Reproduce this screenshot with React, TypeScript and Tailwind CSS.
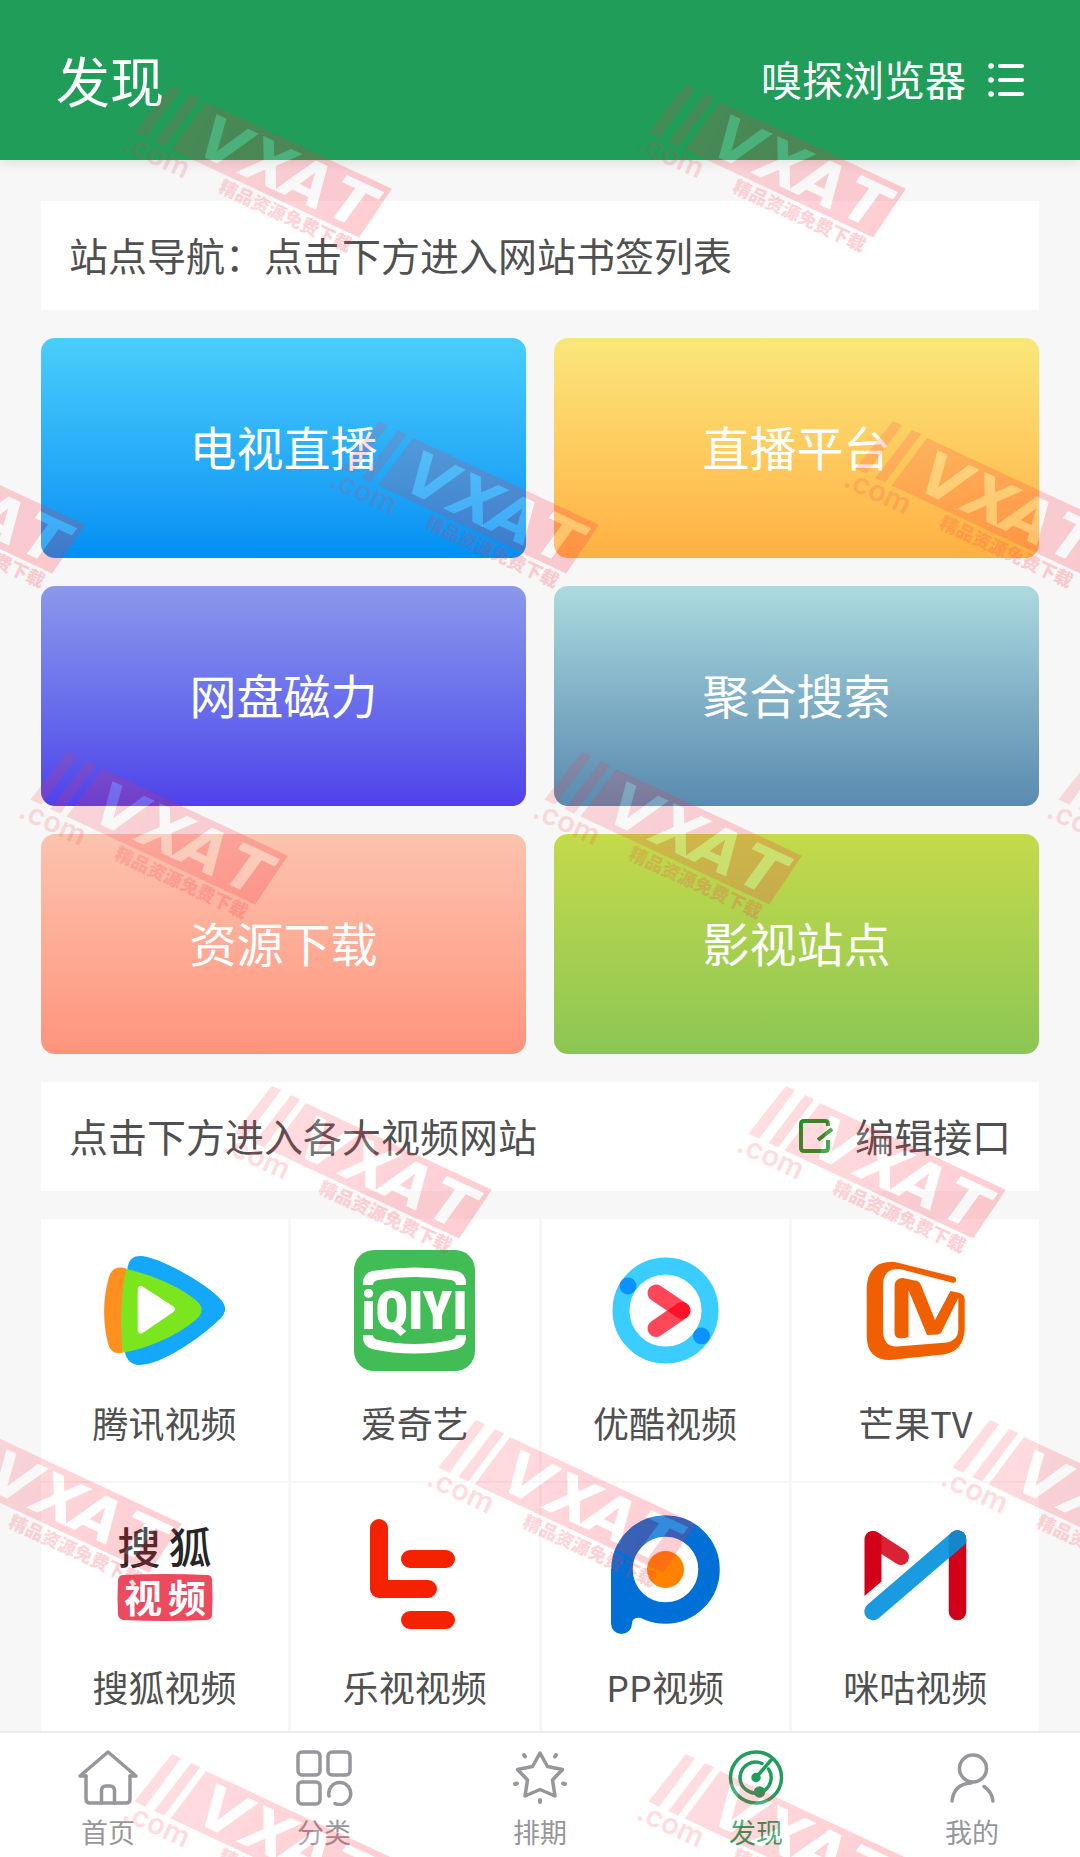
import type { ReactNode } from "react";

const tiles = [
  { name: "电视直播", tone: "from-[#49cefb] to-[#008ff3]" },
  { name: "直播平台", tone: "from-[#f9e77a] to-[#ffb041]" },
  { name: "网盘磁力", tone: "from-[#8b98ea] to-[#5140ea]" },
  { name: "聚合搜索", tone: "from-[#abdadf] to-[#5a8aae]" },
  { name: "资源下载", tone: "from-[#fbc3ae] to-[#ff937d]" },
  { name: "影视站点", tone: "from-[#c4da4a] to-[#8bc653]" },
];

function Logo({ children }: { children: ReactNode }) {
  return (
    <svg viewBox="0 0 121 121" className="size-[121px]" aria-hidden="true">
      {children}
    </svg>
  );
}

const tencent = (
  <Logo>
    <g transform="scale(.3333)">
      <path fill="#ff8f1f" d="M68 56C34 46 21 60 14 85C-4 150 -4 215 12 280Q18 308 40 309L56 308Z" />
      <path fill="#14a8fa" d="M70 58Q74 18 108 18C160 18 300 95 350 148Q377 177 350 205C290 265 170 345 108 345Q72 345 63 308Z" />
      <path fill="#7be61e" d="M66 57C130 70 220 105 272 148Q314 180 272 212C210 262 130 295 56 308Q42 180 66 57Z" />
      <path fill="#fff" d="M101 120Q102 102 117 110L207 169Q219 178 207 187L117 248Q102 256 101 240Z" />
    </g>
  </Logo>
);

const iqiyi = (
  <Logo>
    <rect width="121" height="121" rx="20" fill="#42bd56" />
    <g fill="#fff">
      <path d="M9 35Q8 24 18 21Q60 14 103 21Q113 24 112 35H102Q102 31 97 30Q60 24 24 30Q19 31 19 35Z" />
      <path d="M9 85Q8 96 18 99Q60 108 103 99Q113 96 112 85H102Q102 89 97 90Q60 98 24 90Q19 89 19 85Z" />
      <text x="60.500" y="79" fontSize="54" fontWeight="900" textAnchor="middle" fontFamily="'Roboto Condensed', Roboto, sans-serif">
        iQIYI
      </text>
    </g>
  </Logo>
);

const youku = (
  <Logo>
    <circle cx="60.5" cy="60.5" r="44.5" fill="none" stroke="#3bcdff" strokeWidth="17" />
    <circle cx="23" cy="36" r="8.5" fill="#0a92ff" />
    <circle cx="96.5" cy="86" r="8.5" fill="#0a92ff" />
    <g stroke="#ff0019" strokeOpacity=".72" strokeWidth="17" strokeLinecap="round">
      <path d="M51 43L77 60.5" />
      <path d="M51 78.500L77 60.5" />
    </g>
  </Logo>
);

const mango = (
  <Logo>
    <path
      fill="#f06000"
      d="M39.600 36Q40 28 48 28L62 31Q65 32 66 35L80 70L95.400 41L105 43Q109.700 45 109.700 50V80Q108 102 88 104.500L35 110Q12 110 11.700 86V38Q13 10 40 12L100 27Q103 31 98.500 33L45 19Q28 18 28 35V82Q29 97 42 96.500L92 92.500Q103 90 103.300 80V48L87 81Q86 84 83 84.500L72 85L53.500 40V87Q48 89 43 88Q39.500 87 39.500 82Z"
    />
  </Logo>
);

const sohu = (
  <Logo>
    <g fontFamily="'Noto Sans CJK SC', sans-serif" fontWeight="500" textAnchor="middle" fontSize="43" fill="#262626">
      <text x="35" y="50">搜</text>
      <text x="86" y="50">狐</text>
    </g>
    <path fill="#ec4a5e" d="M19 61Q61 59 103 61Q108 61 108 66Q109 84 108 101Q108 105 103 106Q61 108 19 106Q15 105 14 101Q13 84 14 66Q15 61 19 61Z" />
    <g fontFamily="'Noto Sans CJK SC', sans-serif" fontWeight="700" textAnchor="middle" fontSize="38" fill="#fff">
      <text x="39" y="98">视</text>
      <text x="83" y="98">频</text>
    </g>
  </Logo>
);

const letv = (
  <Logo>
    <path d="M25 14V75H74M56 45H92M56 106H92" fill="none" stroke="#f42200" strokeWidth="18" strokeLinecap="round" strokeLinejoin="round" />
  </Logo>
);

const pp = (
  <Logo>
    <circle cx="60.500" cy="55.500" r="43.500" fill="none" stroke="#006fd6" strokeWidth="21.500" />
    <path fill="#006fd6" d="M6 55V109.500A10.500 10.500 0 0 0 27 109.500Q27 103 36 104L45 106L34 80L20 55Z" />
    <circle cx="60.500" cy="55.500" r="18.500" fill="#ff8200" />
  </Logo>
);

const migu = (
  <Logo>
    <path d="M18 25L46 43" stroke="#d92233" strokeWidth="16" strokeLinecap="round" />
    <path fill="#d3001a" d="M9.500 82V25A8.500 8.500 0 0 1 22 18L26.500 21V67.500Z" />
    <path d="M102.500 25V97.500" stroke="#d3001a" strokeWidth="17.500" strokeLinecap="round" />
    <path d="M18 97.500L102.500 25" stroke="#1b9bdf" strokeWidth="17.500" strokeLinecap="round" />
    <path fill="#1587c8" d="M93.800 32.500V25A8.700 8.700 0 0 1 111.200 25V29L93.800 44Z" />
  </Logo>
);

const sites = [
  { name: "腾讯视频", logo: tencent },
  { name: "爱奇艺", logo: iqiyi },
  { name: "优酷视频", logo: youku },
  { name: "芒果TV", logo: mango },
  { name: "搜狐视频", logo: sohu },
  { name: "乐视视频", logo: letv },
  { name: "PP视频", logo: pp },
  { name: "咪咕视频", logo: migu },
];

const tabs = [
  {
    name: "首页",
    icon: (
      <>
        <path d="M8 27H2L30 3L58 27H52" />
        <path d="M8 27V50Q8 54 12 54H48Q52 54 52 50V27" />
        <path d="M23.500 54V42Q23.500 37 28 37H32Q36.500 37 36.500 42V54" />
      </>
    ),
  },
  {
    name: "分类",
    icon: (
      <>
        <rect x="4" y="3" width="22" height="23" rx="4" />
        <rect x="34" y="3" width="22" height="23" rx="4" />
        <rect x="4" y="33" width="22" height="22" rx="4" />
        <path d="M35 47A11 11 0 1 1 41 54.500" />
      </>
    ),
  },
  {
    name: "排期",
    icon: (
      <>
        <path d="M30 4L37.500 17.500L52.500 20.500L42.500 31L45 47L30 40.500L15 47L17.500 31L7.500 20.500L22.500 17.500Z" />
        <path d="M14 6L15 7.500M46 6L45 7.500M5 35L7 34.500M55 35L53 34.500M30 51V53" strokeWidth="4" />
      </>
    ),
  },
  {
    name: "发现",
    active: true,
    icon: (
      <>
        <circle cx="30" cy="28.500" r="25.500" />
        <path d="M36 14.500A15.500 15.500 0 1 0 42.500 20M30 28.500L46 10" />
        <circle cx="30" cy="28.500" r="3" fill="currentColor" />
        <circle cx="33.500" cy="43" r="4" fill="currentColor" />
      </>
    ),
  },
  {
    name: "我的",
    icon: (
      <>
        <circle cx="31" cy="19.500" r="13.500" />
        <path d="M10 52Q12 35 29 34M42 37.500Q50 43 51 52" />
      </>
    ),
  },
];

const marks = [
  [206, 102], [720, 102],
  [-101, 438], [413, 438], [927, 438],
  [102, 769], [616, 769], [1130, 769],
  [306, 1103], [820, 1103],
  [-4, 1437], [510, 1437], [1024, 1437],
  [206, 1771], [720, 1771],
];

function Watermark() {
  return (
    <svg className="size-full" aria-hidden="true">
      <defs>
        <linearGradient id="mark" gradientUnits="userSpaceOnUse" x1="-50" x2="205" y1="0" y2="0">
          <stop offset="0" stopColor="#ff3046" stopOpacity=".16" />
          <stop offset="1" stopColor="#ff3046" stopOpacity=".24" />
        </linearGradient>
        <mask id="letters" maskUnits="userSpaceOnUse" x="-60" y="-10" width="280" height="100">
          <rect x="-60" y="-10" width="280" height="100" fill="#fff" />
          <text x="10 60 103 154" y="51" fontSize="61" fontWeight="700" fontStyle="italic" fontFamily="'DejaVu Sans', sans-serif" fill="#000">
            VXAT
          </text>
        </mask>
      </defs>
      {marks.map(([x, y]) => (
        <g key={`${x},${y}`} transform={`translate(${x} ${y}) rotate(25)`} fill="url(#mark)">
          <path d="M-38-1L-28-1L-40 58L-52 58Z" />
          <path d="M-17-1L-7-1L-19 58L-30 58Z" />
          <path d="M0 0H205L196 58H-12Z" mask="url(#letters)" />
          <text x="10 60 103 154" y="51" fontSize="61" fontWeight="700" fontStyle="italic" fontFamily="'DejaVu Sans', sans-serif" fill="#fff" fillOpacity=".2">
            VXAT
          </text>
          <text x="-57" y="79" fontSize="29" fontWeight="600" fontFamily="Inter, sans-serif">
            .com
          </text>
          <text x="48" y="76" fontSize="18" fontWeight="900" fontFamily="'Noto Sans CJK SC', sans-serif">
            精品资源免费下载
          </text>
        </g>
      ))}
    </svg>
  );
}

export default function App() {
  return (
    <div className="relative flex h-screen flex-col overflow-hidden bg-[#f7f7f7] font-['Noto_Sans_CJK_SC',sans-serif] text-[#505050]">
      <header className="z-10 flex h-40 shrink-0 items-center justify-between bg-[#1f9d59] px-14 text-white shadow-[0_2px_12px_rgba(0,0,0,0.12)]">
        <h1 className="text-[54px] leading-none">发现</h1>
        <button type="button" className="flex items-center gap-[22px] text-[41px] leading-none">
          <span className="pb-1">嗅探浏览器</span>
          <svg viewBox="0 0 36 36" className="size-9" fill="none" stroke="currentColor" strokeWidth="4" strokeLinecap="round" aria-hidden="true">
            <path d="M12 4H34M12 18H34M12 32H34" />
            <path d="M3 4H3.100M3 18H3.100M3 32H3.100" strokeWidth="5.500" />
          </svg>
        </button>
      </header>

      <main className="min-h-0 flex-1 overflow-y-auto px-[41px] pt-[41px] [scrollbar-width:none]">
        <h2 className="bg-white px-7 pt-[26px] pb-7 text-[39px] leading-[55px]">站点导航：点击下方进入网站书签列表</h2>

        <div className="grid grid-cols-2 gap-7 py-7">
          {tiles.map((tile) => (
            <button
              key={tile.name}
              type="button"
              className={`h-[220px] rounded-[14px] bg-linear-to-b pb-1 text-[47px] text-white ${tile.tone}`}
            >
              {tile.name}
            </button>
          ))}
        </div>

        <div className="flex items-center justify-between bg-white px-7 pt-[26px] pb-7 text-[39px] leading-[55px]">
          <h2>点击下方进入各大视频网站</h2>
          <button type="button" className="flex items-center gap-[22px]">
            <svg viewBox="0 0 34 34" className="size-[34px]" fill="none" stroke="#1b9420" strokeWidth="4" aria-hidden="true">
              <path d="M29 7V5Q29 2 26 2H5Q2 2 2 5V29Q2 32 5 32H26Q29 32 29 29V21M19 21L33 10" />
            </svg>
            编辑接口
          </button>
        </div>

        <div className="mt-7 grid grid-cols-4 gap-x-[3px] gap-y-[2px]">
          {sites.map((site) => (
            <a key={site.name} href="#" className="flex flex-col items-center bg-white pt-[31px] pb-8">
              {site.logo}
              <span className="mt-6 text-[36px] leading-[54px]">{site.name}</span>
            </a>
          ))}
        </div>
      </main>

      <nav className="z-10 grid h-[126px] shrink-0 grid-cols-5 border-t-2 border-[#ececec] bg-white">
        {tabs.map((tab) => (
          <a
            key={tab.name}
            href="#"
            className={`flex flex-col items-center gap-[6px] pt-4 text-[27px] leading-10 ${tab.active ? "text-[#1f9d59]" : "text-[#96969c]"}`}
          >
            <svg viewBox="0 0 60 57" className="h-[57px] w-[60px]" fill="none" stroke="currentColor" strokeWidth="3.500" strokeLinecap="round" strokeLinejoin="round" aria-hidden="true">
              {tab.icon}
            </svg>
            {tab.name}
          </a>
        ))}
      </nav>

      <div className="pointer-events-none absolute inset-0 z-20">
        <Watermark />
      </div>
    </div>
  );
}
